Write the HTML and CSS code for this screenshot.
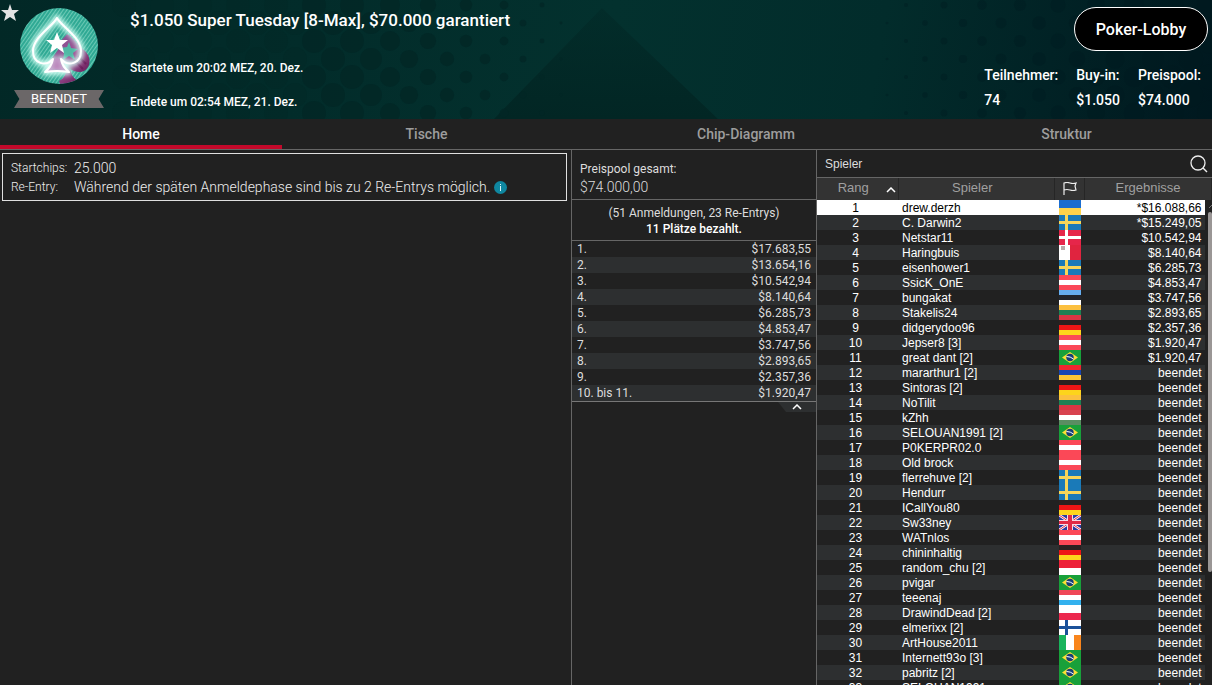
FILE: index.html
```
<!DOCTYPE html>
<html lang="de">
<head>
    <meta charset="UTF-8">
    <meta name="viewport" content="width=device-width, initial-scale=1.0">
    <title>Super Tuesday - Turnierlobby</title>
    <link rel="stylesheet" href="styles.css">
</head>
<body>
    <svg class="sprite" aria-hidden="true">
        <symbol id="ua" viewBox="0 0 22 15" preserveAspectRatio="none"><path fill="#1c6dd0" d="M0 0h22v8H0z"/><path fill="#ffd34a" d="M0 8h22v7H0z"/></symbol>
        <symbol id="se" viewBox="0 0 22 15" preserveAspectRatio="none"><path fill="#1a7ab8" d="M0 0h22v15H0z"/><path fill="#f7d65a" d="M6 0h3v15H6zM0 6h22v3H0z"/></symbol>
        <symbol id="dk" viewBox="0 0 22 15" preserveAspectRatio="none"><path fill="#e6264a" d="M0 0h22v15H0z"/><path fill="#fff" d="M6 0h3v15H6zM0 6h22v3H0z"/></symbol>
        <symbol id="mt" viewBox="0 0 22 15" preserveAspectRatio="none"><path fill="#fff" d="M0 0h11v15H0z"/><path fill="#e0243f" d="M11 0h11v15H11z"/><path fill="#b9a9a9" d="M2 1h4v4H2z"/></symbol>
        <symbol id="at" viewBox="0 0 22 15" preserveAspectRatio="none"><path fill="#fb4857" d="M0 0h22v15H0z"/><path fill="#fff" d="M0 5h22v5H0z"/></symbol>
        <symbol id="ee" viewBox="0 0 22 15" preserveAspectRatio="none"><path fill="#66aef0" d="M0 0h22v5H0z"/><path fill="#22262e" d="M0 5h22v5H0z"/><path fill="#fff" d="M0 10h22v5H0z"/></symbol>
        <symbol id="lt" viewBox="0 0 22 15" preserveAspectRatio="none"><path fill="#fcc03f" d="M0 0h22v5H0z"/><path fill="#1d8154" d="M0 5h22v5H0z"/><path fill="#d83744" d="M0 10h22v5H0z"/></symbol>
        <symbol id="de" viewBox="0 0 22 15" preserveAspectRatio="none"><path fill="#2b2120" d="M0 0h22v5H0z"/><path fill="#ee1515" d="M0 5h22v5H0z"/><path fill="#fdd41c" d="M0 10h22v5H0z"/></symbol>
        <symbol id="br" viewBox="0 0 22 15" preserveAspectRatio="none"><path fill="#18a03a" d="M0 0h22v15H0z"/><path fill="#fbdf35" d="M11 2l8 5.500-8 5.500-8-5.500z"/><circle cx="11" cy="7.500" r="3.700" fill="#173d78"/><path stroke="#fff" d="M7.500 6.500q4 0 7 2.500" fill="none"/></symbol>
        <symbol id="am" viewBox="0 0 22 15" preserveAspectRatio="none"><path fill="#ef2530" d="M0 0h22v5H0z"/><path fill="#1846b4" d="M0 5h22v5H0z"/><path fill="#fdc638" d="M0 10h22v5H0z"/></symbol>
        <symbol id="hu" viewBox="0 0 22 15" preserveAspectRatio="none"><path fill="#d8434f" d="M0 0h22v5H0z"/><path fill="#fff" d="M0 5h22v5H0z"/><path fill="#5a8d62" d="M0 10h22v5H0z"/></symbol>
        <symbol id="gb" viewBox="0 0 22 15" preserveAspectRatio="none"><path fill="#2a3aa0" d="M0 0h22v15H0z"/><path stroke="#fff" stroke-width="2.500" d="M0 0l22 15M22 0L0 15"/><path stroke="#e02a45" d="M0 0l22 15M22 0L0 15"/><path fill="#f6dbe6" d="M8 0h6v15H8zM0 5h22v5H0z"/><path fill="#e02a45" d="M9 0h4v15H9zM0 6h22v3H0z"/></symbol>
        <symbol id="id" viewBox="0 0 22 15" preserveAspectRatio="none"><path fill="#ed2138" d="M0 0h22v8H0z"/><path fill="#fff" d="M0 8h22v7H0z"/></symbol>
        <symbol id="lu" viewBox="0 0 22 15" preserveAspectRatio="none"><path fill="#ef4757" d="M0 0h22v5H0z"/><path fill="#fff" d="M0 5h22v5H0z"/><path fill="#33b1ee" d="M0 10h22v5H0z"/></symbol>
        <symbol id="pl" viewBox="0 0 22 15" preserveAspectRatio="none"><path fill="#fff" d="M0 0h22v8H0z"/><path fill="#ec284e" d="M0 8h22v7H0z"/></symbol>
        <symbol id="fi" viewBox="0 0 22 15" preserveAspectRatio="none"><path fill="#fff" d="M0 0h22v15H0z"/><path fill="#1b5199" d="M6 0h3v15H6zM0 6h22v3H0z"/></symbol>
        <symbol id="ie" viewBox="0 0 22 15" preserveAspectRatio="none"><path fill="#19b45c" d="M0 0h7v15H0z"/><path fill="#fff" d="M7 0h8v15H7z"/><path fill="#f9851c" d="M15 0h7v15h-7z"/></symbol>
    </svg>

    <header class="hero">
        <svg class="hero-pattern" viewBox="0 0 1212 119" preserveAspectRatio="xMidYMid slice" aria-hidden="true">
            <defs>
                <linearGradient id="peak" x1="0" y1="0" x2="0" y2="1">
                    <stop offset="0" stop-color="#022624" stop-opacity="0.4"/>
                    <stop offset="1" stop-color="#022624"/>
                </linearGradient>
            </defs>
            <path d="M602 8L718 119H494z" fill="url(#peak)"/>
            <g id="dots"></g>
        </svg>

        <button class="favorite" aria-label="Favorit">
            <svg width="18" height="18" viewBox="0 0 18 18"><path fill="#e3e3e3" d="M9 0l2 6h7l-5 4 2 7-6-4-6 4 2-7-5-4h7z"/></svg>
        </button>

        <div class="badge">
            <svg class="logo" width="78" height="76" viewBox="0 0 78 76" aria-hidden="true">
                <defs>
                    <pattern id="stripes" width="3" height="3" patternUnits="userSpaceOnUse" patternTransform="rotate(35)">
                        <path fill="#2fa994" d="M0 0h3v3H0z"/>
                        <path fill="#6cc9b5" d="M0 0h1v3H0z"/>
                    </pattern>
                    <linearGradient id="purple" x1="0" y1="0" x2="1" y2="1">
                        <stop offset="0" stop-color="#7c5a93"/>
                        <stop offset="0.5" stop-color="#9b4d92"/>
                        <stop offset="1" stop-color="#5b1048"/>
                    </linearGradient>
                    <clipPath id="disc"><ellipse cx="39" cy="38" rx="39" ry="38"/></clipPath>
                    <filter id="glow" x="-30%" y="-30%" width="160%" height="160%"><feGaussianBlur stdDeviation="2.500"/></filter>
                </defs>
                <g clip-path="url(#disc)">
                    <path fill="url(#stripes)" d="M0 0h78v76H0z"/>
                    <path fill="url(#purple)" d="M47 26c6 3 11 11 18 17 8 8 5 20-5 21-4 0-7-1-10-3 1 5 3 9 8 12l-1 3H40l-1-3c6-3 7-8 8-14-6 4-16 3-19-3l10-14 2-8z"/>
                    <path fill="#4fb9a5" d="M49 34l2 6 7 1-5 4 2 7-6-4-6 4 1-7-4-5 7-1z"/>
                    <path fill="none" stroke="#6b1d5c" stroke-width="2" d="M54 52l9 9M58 48l8 8"/>
                    <g fill="none" stroke-linejoin="round">
                        <path filter="url(#glow)" stroke="#d5fff5" stroke-width="6" d="M37 10C33 18 13 29 13 43c0 13 13 16 20 8-1 6-3 9-8 13h24c-5-4-7-7-8-13 7 8 20 5 20-8C61 29 41 18 37 10z"/>
                        <path fill="#c48ac2" fill-opacity="0.7" d="M33 51c-1 6-3 9-7 12h21c-4-3-6-6-7-12l-3-1z"/>
                        <path stroke="#fff" stroke-width="2" d="M37 10C33 18 13 29 13 43c0 13 13 16 20 8-1 6-3 9-8 13q12-2 24 0c-5-4-7-7-8-13 7 8 20 5 20-8C61 29 41 18 37 10z"/>
                    </g>
                    <path fill="#fff" d="M37 24l3 8h8l-6 5 2 8-7-5-7 5 2-8-6-5h8z"/>
                </g>
            </svg>
            <span class="ribbon">BEENDET</span>
        </div>

        <div class="hero-text">
            <h1>$1.050 Super Tuesday [8-Max], $70.000 garantiert</h1>
            <p>Startete um 20:02 MEZ, 20. Dez.</p>
            <p>Endete um 02:54 MEZ, 21. Dez.</p>
        </div>

        <div class="hero-side">
            <button class="lobby-btn">Poker-Lobby</button>
            <dl class="stats">
                <div><dt>Teilnehmer:</dt><dd>74</dd></div>
                <div><dt>Buy-in:</dt><dd>$1.050</dd></div>
                <div><dt>Preispool:</dt><dd>$74.000</dd></div>
            </dl>
        </div>
    </header>

    <nav class="tabs">
        <a href="#home" class="active">Home</a>
        <a href="#tische">Tische</a>
        <a href="#chips">Chip-Diagramm</a>
        <a href="#struktur">Struktur</a>
    </nav>

    <main class="content">
        <section class="home">
            <dl class="info-box">
                <dt>Startchips:</dt>
                <dd>25.000</dd>
                <dt>Re-Entry:</dt>
                <dd>Während der späten Anmeldephase sind bis zu 2 Re-Entrys möglich.
                    <svg class="info-icon" width="13" height="13" viewBox="0 0 13 13" aria-hidden="true"><circle cx="6.500" cy="6.500" r="6.500" fill="#0f87a0"/><path fill="#d8f4fa" d="M6 3h1v1H6zM6 5h1v5H6z"/></svg>
                </dd>
            </dl>
        </section>

        <section class="prizes">
            <div class="prize-total">
                <div>Preispool gesamt:</div>
                <div class="amount">$74.000,00</div>
            </div>
            <div class="prize-entries">
                <div>(51 Anmeldungen, 23 Re-Entrys)</div>
                <strong>11 Plätze bezahlt.</strong>
            </div>
            <table class="prize-table">
                <tbody>
                    <tr><td>1.</td><td>$17.683,55</td></tr>
                    <tr><td>2.</td><td>$13.654,16</td></tr>
                    <tr><td>3.</td><td>$10.542,94</td></tr>
                    <tr><td>4.</td><td>$8.140,64</td></tr>
                    <tr><td>5.</td><td>$6.285,73</td></tr>
                    <tr><td>6.</td><td>$4.853,47</td></tr>
                    <tr><td>7.</td><td>$3.747,56</td></tr>
                    <tr><td>8.</td><td>$2.893,65</td></tr>
                    <tr><td>9.</td><td>$2.357,36</td></tr>
                    <tr><td>10. bis 11.</td><td>$1.920,47</td></tr>
                </tbody>
            </table>
            <button class="collapse" aria-label="Einklappen">
                <svg width="10" height="6" viewBox="0 0 10 6"><path d="M1 5l4-4 4 4" fill="none" stroke="#fff" stroke-width="1.500"/></svg>
            </button>
        </section>

        <section class="players">
            <div class="players-title">
                <h2>Spieler</h2>
                <button aria-label="Suchen">
                    <svg width="18" height="18" viewBox="0 0 18 18"><circle cx="8" cy="8" r="7" fill="none" stroke="#eee" stroke-width="1.300"/><path d="M13 13l4 4" stroke="#eee" stroke-width="1.500"/></svg>
                </button>
            </div>
            <div class="players-list">
                <table class="players-table">
                    <colgroup>
                        <col class="col-rank">
                        <col>
                        <col class="col-flag">
                        <col class="col-result">
                    </colgroup>
                    <thead>
                        <tr>
                            <th>Rang <svg class="sort" width="10" height="6" viewBox="0 0 10 6"><path d="M1 5l4-4 4 4" fill="none" stroke="#fff" stroke-width="1.500"/></svg></th>
                            <th>Spieler</th>
                            <th><svg width="14" height="13" viewBox="0 0 14 13"><path d="M1 13V1q3-1 6 0t6 0l-1 3 1 4q-3 1-6 0T1 8" fill="none" stroke="#eee" stroke-width="1.200"/></svg></th>
                            <th>Ergebnisse</th>
                        </tr>
                    </thead>
                    <tbody id="rows"></tbody>
                </table>
                <div class="scrollbar">
                    <svg width="6" height="12" viewBox="0 0 6 12"><path d="M1 8l4-4" stroke="#777" fill="none"/></svg>
                    <div class="thumb"></div>
                </div>
            </div>
        </section>
    </main>

    <script>
        // Name, Land, Ergebnis
        const players = [
            ['drew.derzh', 'ua', '*$16.088,66'],
            ['C. Darwin2', 'se', '*$15.249,05'],
            ['Netstar11', 'dk', '$10.542,94'],
            ['Haringbuis', 'mt', '$8.140,64'],
            ['eisenhower1', 'se', '$6.285,73'],
            ['SsicK_OnE', 'at', '$4.853,47'],
            ['bungakat', 'ee', '$3.747,56'],
            ['Stakelis24', 'lt', '$2.893,65'],
            ['didgerydoo96', 'de', '$2.357,36'],
            ['Jepser8 [3]', 'at', '$1.920,47'],
            ['great dant [2]', 'br', '$1.920,47'],
            ['mararthur1 [2]', 'am'],
            ['Sintoras [2]', 'de'],
            ['NoTilit', 'lt'],
            ['kZhh', 'hu'],
            ['SELOUAN1991 [2]', 'br'],
            ['P0KERPR02.0', 'at'],
            ['Old brock', 'at'],
            ['flerrehuve [2]', 'se'],
            ['Hendurr', 'se'],
            ['ICallYou80', 'de'],
            ['Sw33ney', 'gb'],
            ['WATnlos', 'at'],
            ['chininhaltig', 'de'],
            ['random_chu [2]', 'id'],
            ['pvigar', 'br'],
            ['teeenaj', 'lu'],
            ['DrawindDead [2]', 'pl'],
            ['elmerixx [2]', 'fi'],
            ['ArtHouse2011', 'ie'],
            ['Internett93o [3]', 'br'],
            ['pabritz [2]', 'br'],
            ['SELOUAN1991', 'br']
        ];

        document.getElementById('rows').innerHTML = players.map(([name, flag, result], index) => `
            <tr${index === 0 ? ' class="selected"' : ''}>
                <td>${index + 1}</td>
                <td>${name}</td>
                <td class="flag"><svg width="22" height="15"><use href="#${flag}"/></svg></td>
                <td>${result || 'beendet'}</td>
            </tr>
        `).join('');

        // Punktmuster im Kopfbereich, wird zur Mitte hin kleiner
        let dots = '';
        for (let row = 0; row < 7; row++) {
            const shift = row % 2 ? 19 : 0;
            const y = 5 + row * 18;
            for (let x = 124 + shift; x < 570; x += 38) {
                const r = Math.min(12, (590 - x) / 20);
                dots += `<circle cx="${x}" cy="${y}" r="${r}" fill="#022725" opacity="${x < 300 ? 0.4 : 0.8}"/>`;
            }
            for (let x = 1210 - shift; x > 870; x -= 38) {
                dots += `<circle cx="${x}" cy="${y}" r="${(x - 850) / 28}" fill="#001a20" opacity="0.35"/>`;
            }
        }
        document.getElementById('dots').innerHTML = dots;
    </script>
</body>
</html>
```
FILE: styles.css
```
/* Style global */
* {
    box-sizing: border-box;
}

body {
    font-family: Roboto, sans-serif;
    margin: 0;
    background: #212121;
    color: #fff;
    display: flex;
    flex-direction: column;
    height: 100vh;
    overflow: hidden;
}

h1, h2, p, dl, dd {
    margin: 0;
}

button {
    background: none;
    border: none;
    padding: 0;
    color: inherit;
    font-family: inherit;
    cursor: pointer;
}

svg {
    display: block;
}

.sprite {
    position: absolute;
    width: 0;
    height: 0;
}

/* Kopfbereich */
.hero {
    position: relative;
    display: flex;
    height: 119px;
    flex-shrink: 0;
    background: linear-gradient(100deg, #022826 0%, #022c2a 25%, #03312e 50%, #022c2b 72%, #00181f 100%);
    font-weight: 500;
}

.hero-pattern {
    position: absolute;
    inset: 0;
    width: 100%;
    height: 100%;
}

.favorite {
    position: absolute;
    top: 4px;
    left: 1px;
}

.badge {
    position: relative;
    display: flex;
    flex-direction: column;
    align-items: center;
    gap: 6px;
    width: 104px;
    padding: 8px 0 0 14px;
}

.ribbon {
    width: 90px;
    background: #6b6768;
    clip-path: polygon(0 0, 100% 0, 94% 50%, 100% 100%, 0 100%, 6% 50%);
    font-size: 13px;
    font-weight: 400;
    line-height: 18px;
    text-align: center;
}

.hero-text {
    position: relative;
    flex: 1;
    padding: 10px 0 0 26px;
}

.hero-text h1 {
    margin-bottom: 30px;
    font-size: 17px;
    font-weight: 500;
    line-height: 20px;
}

.hero-text p {
    margin-bottom: 18px;
    font-size: 12px;
    line-height: 16px;
}

.hero-side {
    position: relative;
    display: flex;
    flex-direction: column;
    align-items: flex-end;
    gap: 12px;
    padding: 7px 4px 0 0;
}

.lobby-btn {
    width: 134px;
    height: 44px;
    border: 1px solid #fff;
    border-radius: 22px;
    background: #000;
    font-size: 16px;
    font-weight: 500;
}

.stats {
    display: flex;
    gap: 18px;
    padding-right: 7px;
    font-size: 14px;
    line-height: 25px;
}

/* Tabs */
.tabs {
    display: grid;
    grid-template-columns: 282fr 289fr 350fr 291fr;
    flex-shrink: 0;
    height: 31px;
    border-bottom: 1px solid #666;
}

.tabs a {
    padding-top: 4px;
    border-bottom: 4px solid transparent;
    color: #9d9d9d;
    font-size: 14px;
    font-weight: 500;
    line-height: 22px;
    text-align: center;
    text-decoration: none;
}

.tabs a.active {
    border-color: #c4092b;
    color: #fff;
}

/* Inhalt */
.content {
    display: grid;
    grid-template-columns: 571fr 245fr 396fr;
    flex: 1;
    min-height: 0;
}

.home {
    padding: 3px 4px 0 2px;
}

.info-box {
    display: grid;
    grid-template-columns: 63px 1fr;
    align-items: center;
    padding: 5px 8px 3px;
    border: 1px solid #e0e0e0;
    color: #eee;
    font-size: 14px;
    font-weight: 300;
    line-height: 19px;
}

.info-box dt {
    font-size: 12px;
}

.info-icon {
    display: inline-block;
    vertical-align: -2px;
}

/* Preise */
.prizes {
    display: flex;
    flex-direction: column;
    border-left: 1px solid #666;
    color: #ddd;
    font-size: 12px;
}

.prize-total {
    padding: 10px 8px 3px;
    border-bottom: 1px solid #666;
    line-height: 18px;
}

.prize-total .amount {
    font-size: 14px;
    font-weight: 300;
}

.prize-entries {
    padding: 5px 0 3px;
    border-bottom: 1px solid #666;
    line-height: 16px;
    text-align: center;
}

.prize-entries strong {
    color: #fff;
    font-weight: 500;
}

.prize-table {
    width: 100%;
    border-collapse: collapse;
    border-bottom: 1px solid #777;
    line-height: 16px;
}

.prize-table td {
    padding: 0 5px;
}

.prize-table td:last-child {
    text-align: right;
}

.prize-table tr:nth-child(even) {
    background: #2d2f30;
}

.collapse {
    display: flex;
    align-items: center;
    justify-content: center;
    align-self: flex-end;
    width: 38px;
    height: 10px;
    background: #2d2f30;
    clip-path: polygon(0 0, 100% 0, 100% 100%, 8px 100%);
}

/* Spielerliste */
.players {
    display: flex;
    flex-direction: column;
    min-height: 0;
    border-left: 1px solid #666;
    font-family: "Liberation Sans", Arial, sans-serif;
}

.players-title {
    display: flex;
    align-items: center;
    justify-content: space-between;
    flex-shrink: 0;
    height: 28px;
    padding: 0 4px 0 8px;
    border-bottom: 1px solid #666;
}

.players-title h2 {
    color: #ddd;
    font-size: 12px;
    font-weight: 400;
}

.players-list {
    position: relative;
    flex: 1;
    min-height: 0;
    overflow: hidden;
}

.players-table {
    width: 100%;
    border-collapse: collapse;
    table-layout: fixed;
    font-size: 12px;
    line-height: 14px;
}

.col-rank { width: 81px; }
.col-flag { width: 30px; }
.col-result { width: 127px; }

.players-table th {
    position: relative;
    height: 22px;
    padding: 0 8px 2px 0;
    border-right: 1px solid #262626;
    background: #333;
    color: #a0a0a0;
    font-size: 13px;
    font-weight: 400;
}

.players-table th:nth-child(n+3) {
    padding-right: 0;
}

.players-table th svg {
    margin: 0 auto;
}

.players-table th .sort {
    position: absolute;
    top: 9px;
    right: 2px;
}

.players-table td {
    height: 15px;
    padding: 1px 4px 0;
    white-space: nowrap;
}

.players-table td.flag {
    padding-top: 0;
}

.players-table td:first-child {
    padding-right: 8px;
    text-align: center;
}

.players-table td:last-child {
    padding-right: 10px;
    text-align: right;
}

.players-table tbody tr:nth-child(even) {
    background: #2d2f30;
}

.players-table tbody tr.selected {
    background: #fff;
    color: #000;
}

.scrollbar {
    position: absolute;
    top: 22px;
    right: 0;
    bottom: 0;
    width: 7px;
    padding-left: 3px;
    background: #212121;
}

.thumb {
    height: 78%;
    max-height: 360px;
    border-radius: 2px;
    background: #9a9695;
}
```
